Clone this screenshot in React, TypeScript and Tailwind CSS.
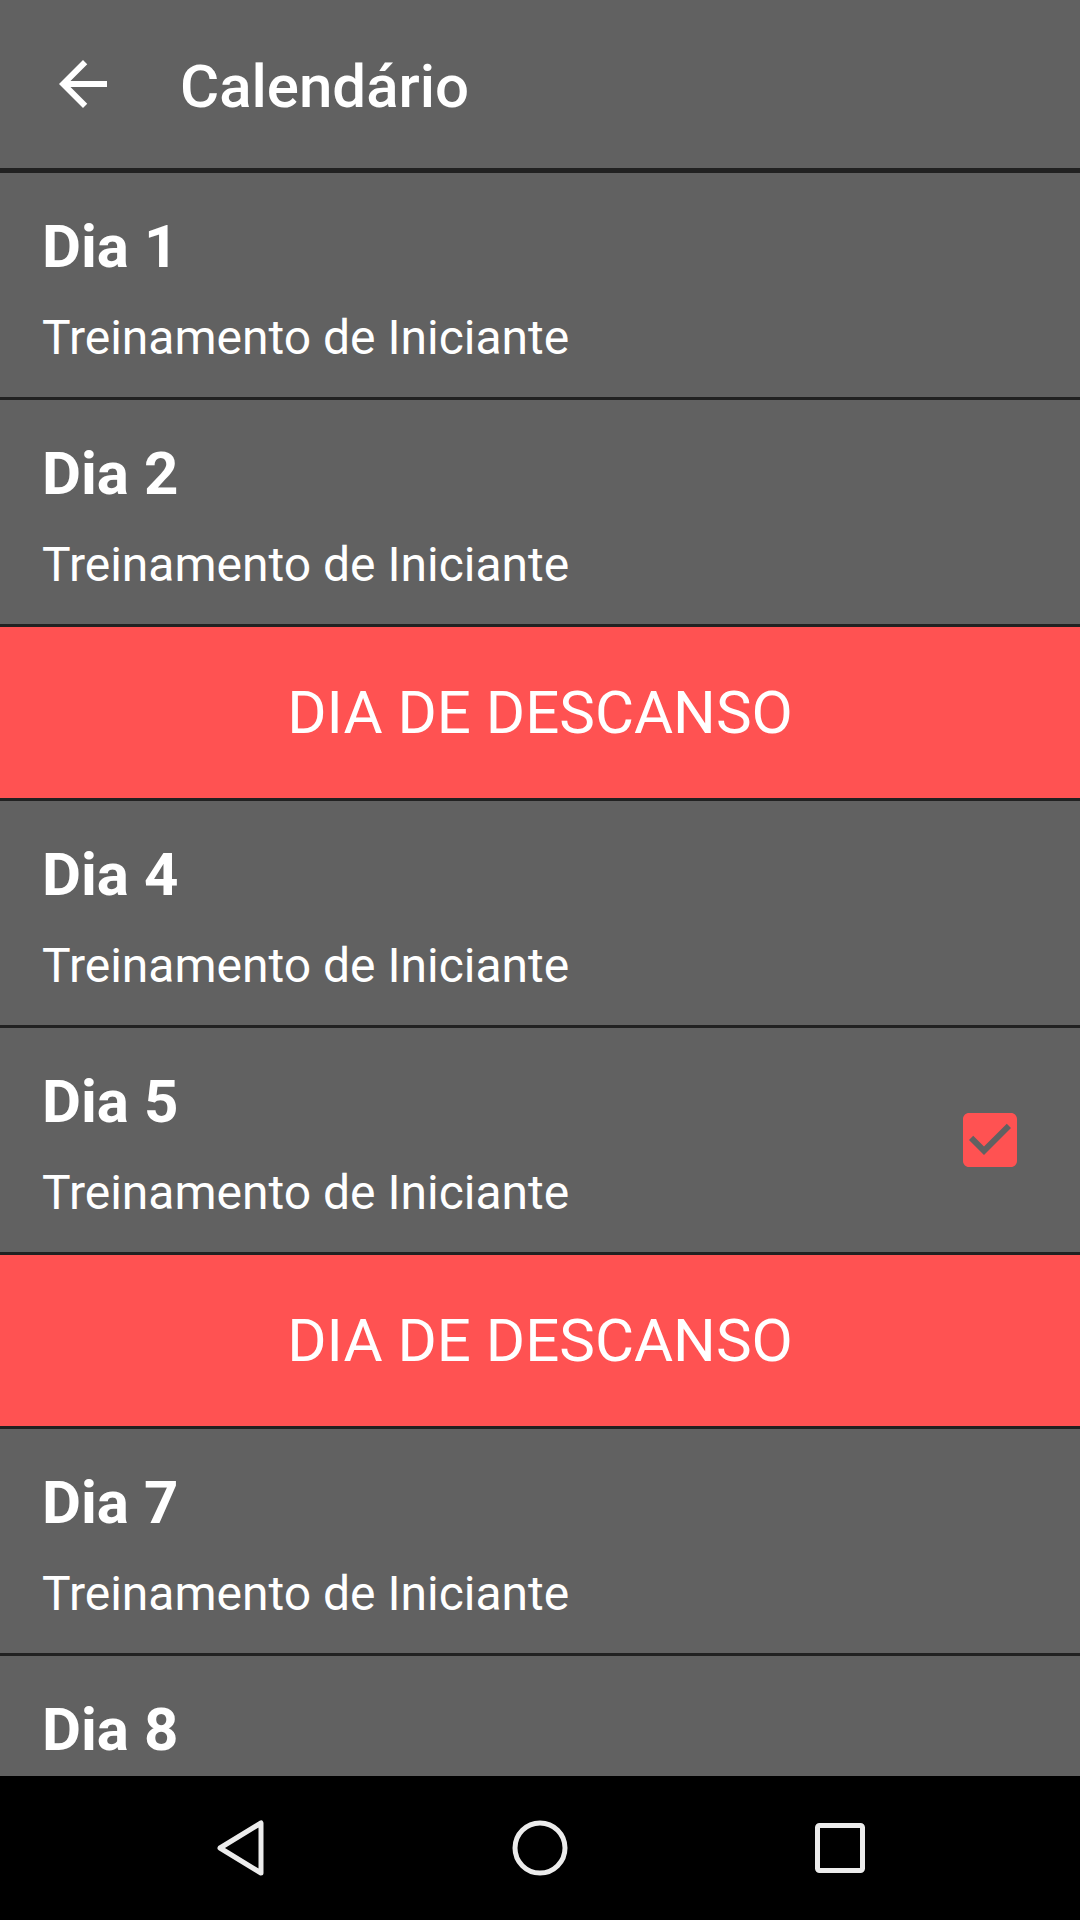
import React from "react";

type Item = { kind: "day"; n: number; checked?: boolean } | { kind: "rest" };

const items: Item[] = [
  { kind: "day", n: 1 },
  { kind: "day", n: 2 },
  { kind: "rest" },
  { kind: "day", n: 4 },
  { kind: "day", n: 5, checked: true },
  { kind: "rest" },
  { kind: "day", n: 7 },
  { kind: "day", n: 8 },
];

function CheckBox() {
  return (
    <svg width="72" height="72" viewBox="0 0 24 24" className="block">
      <path
        fill="#FF5252"
        d="M19 3H5c-1.11 0-2 .9-2 2v14c0 1.1.89 2 2 2h14c1.11 0 2-.9 2-2V5c0-1.1-.89-2-2-2zm-9 14l-5-5 1.41-1.41L10 14.170l7.59-7.59L19 8l-9 9z"
      />
    </svg>
  );
}

export default function App() {
  return (
    <div
      className="w-[1080px] h-[1920px] flex flex-col bg-[#616161] overflow-hidden text-white"
      style={{ fontFamily: "Roboto, 'Noto Sans', sans-serif" }}
    >
      <header className="h-[173px] shrink-0 flex items-center border-b-[5px] border-[#212121]">
        <svg width="72" height="72" viewBox="0 0 24 24" className="ml-[47px] block">
          <path fill="#ffffff" d="M20 11H7.83l5.59-5.59L12 4l-8 8 8 8 1.41-1.41L7.83 13H20v-2z" />
        </svg>
        <h1 className="ml-[61px] mt-[5px] text-[60px] leading-none font-medium">Calendário</h1>
      </header>
      <div className="flex-1 overflow-hidden flex flex-col">
        {items.map((it, i) =>
          it.kind === "rest" ? (
            <div
              key={i}
              className="h-[174px] shrink-0 bg-[#FF5252] border-b-[3px] border-[#212121] flex items-center justify-center"
            >
              <span className="text-[60px] leading-none font-normal">DIA DE DESCANSO</span>
            </div>
          ) : (
            <div
              key={i}
              className="h-[227px] shrink-0 border-b-[3px] border-[#212121] pl-[42px] pr-[54px] flex items-center"
            >
              <div className="flex-1 self-stretch pt-[44px]">
                <div className="text-[60px] leading-none font-bold">Dia {it.n}</div>
                <div className="mt-[37px] text-[48px] leading-none font-normal">Treinamento de Iniciante</div>
              </div>
              {it.checked && <CheckBox />}
            </div>
          )
        )}
      </div>
      <nav className="h-[144px] shrink-0 bg-black flex items-center justify-center gap-[240px]">
        <svg width="60" height="60" viewBox="0 0 60 60" className="block">
          <polygon
            points="10,30 51,5 51,55"
            fill="none"
            stroke="#ececec"
            strokeWidth="5"
            strokeLinejoin="round"
          />
        </svg>
        <svg width="60" height="60" viewBox="0 0 60 60" className="block">
          <circle cx="30" cy="30" r="25" fill="none" stroke="#ececec" strokeWidth="5" />
        </svg>
        <svg width="60" height="60" viewBox="0 0 60 60" className="block">
          <rect x="7.5" y="7.5" width="45" height="45" rx="2" fill="none" stroke="#ececec" strokeWidth="5" />
        </svg>
      </nav>
    </div>
  );
}
